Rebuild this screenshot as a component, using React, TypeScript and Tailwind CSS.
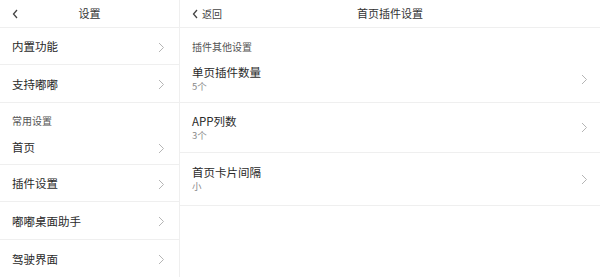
import React from 'react';

const FONT = { fontFamily: '"Noto Sans CJK SC", "Noto Sans", sans-serif' };

const Chevron = () => (
  <svg width="7" height="11" viewBox="0 0 7 11" fill="none">
    <polyline points="1,1 5.5,5.5 1,10" stroke="#b5b5b5" strokeWidth="1" />
  </svg>
);

const Back = () => (
  <svg width="7" height="10" viewBox="0 0 7 10" fill="none">
    <polyline points="5,1 1.5,5 5,9" stroke="#444" strokeWidth="1.3" />
  </svg>
);

const LeftRow = ({ label, h, border = true }: { label: string; h: string; border?: boolean }) => (
  <div className={`flex items-center justify-between pl-[12px] pr-[14px] pt-[2px] ${h} ${border ? 'border-b border-[#efefef]' : ''}`}>
    <span className="text-[11.5px] text-[#2a2a2a]">{label}</span>
    <Chevron />
  </div>
);

const RightRow = ({ title, value, h }: { title: string; value: string; h: string }) => (
  <div className={`flex items-center justify-between pl-[12px] pr-[12px] border-b border-[#efefef] ${h}`}>
    <div className="flex flex-col">
      <span className="text-[11.5px] leading-[15px] text-[#2a2a2a]">{title}</span>
      <span className="text-[9.5px] leading-[13px] text-[#8a8a8a]">{value}</span>
    </div>
    <Chevron />
  </div>
);

export default function App() {
  return (
    <div className="flex w-[600px] h-[277px] bg-white overflow-hidden" style={FONT}>
      {/* left: settings */}
      <div className="w-[180px] flex flex-col border-r border-[#efefef]">
        <div className="h-[28px] flex items-center relative border-b border-[#efefef]">
          <div className="pl-[12px]"><Back /></div>
          <span className="absolute left-0 right-0 text-center text-[11px] text-[#333] pointer-events-none">设置</span>
        </div>
        <LeftRow label="内置功能" h="h-[37px]" />
        <LeftRow label="支持嘟嘟" h="h-[38px]" />
        <div className="h-[27px] flex items-end pl-[12px] pb-[2px]">
          <span className="text-[10px] text-[#555]">常用设置</span>
        </div>
        <LeftRow label="首页" h="h-[35px]" />
        <LeftRow label="插件设置" h="h-[37px]" />
        <LeftRow label="嘟嘟桌面助手" h="h-[38px]" />
        <LeftRow label="驾驶界面" h="h-[37px]" border={false} />
      </div>

      {/* right: plugin settings */}
      <div className="flex-1 flex flex-col">
        <div className="h-[28px] flex items-center relative border-b border-[#efefef]">
          <div className="pl-[12px] flex items-center gap-[3px]">
            <Back />
            <span className="text-[10px] text-[#444]">返回</span>
          </div>
          <span className="absolute left-0 right-0 text-center text-[11px] text-[#333] pointer-events-none">首页插件设置</span>
        </div>
        <div className="h-[30px] flex items-center pl-[12px] pt-[6px]">
          <span className="text-[10px] text-[#555]">插件其他设置</span>
        </div>
        <RightRow title="单页插件数量" value="5个" h="h-[45px] pb-[2px]" />
        <RightRow title="APP列数" value="3个" h="h-[50px]" />
        <RightRow title="首页卡片间隔" value="小" h="h-[53px]" />
      </div>
    </div>
  );
}
